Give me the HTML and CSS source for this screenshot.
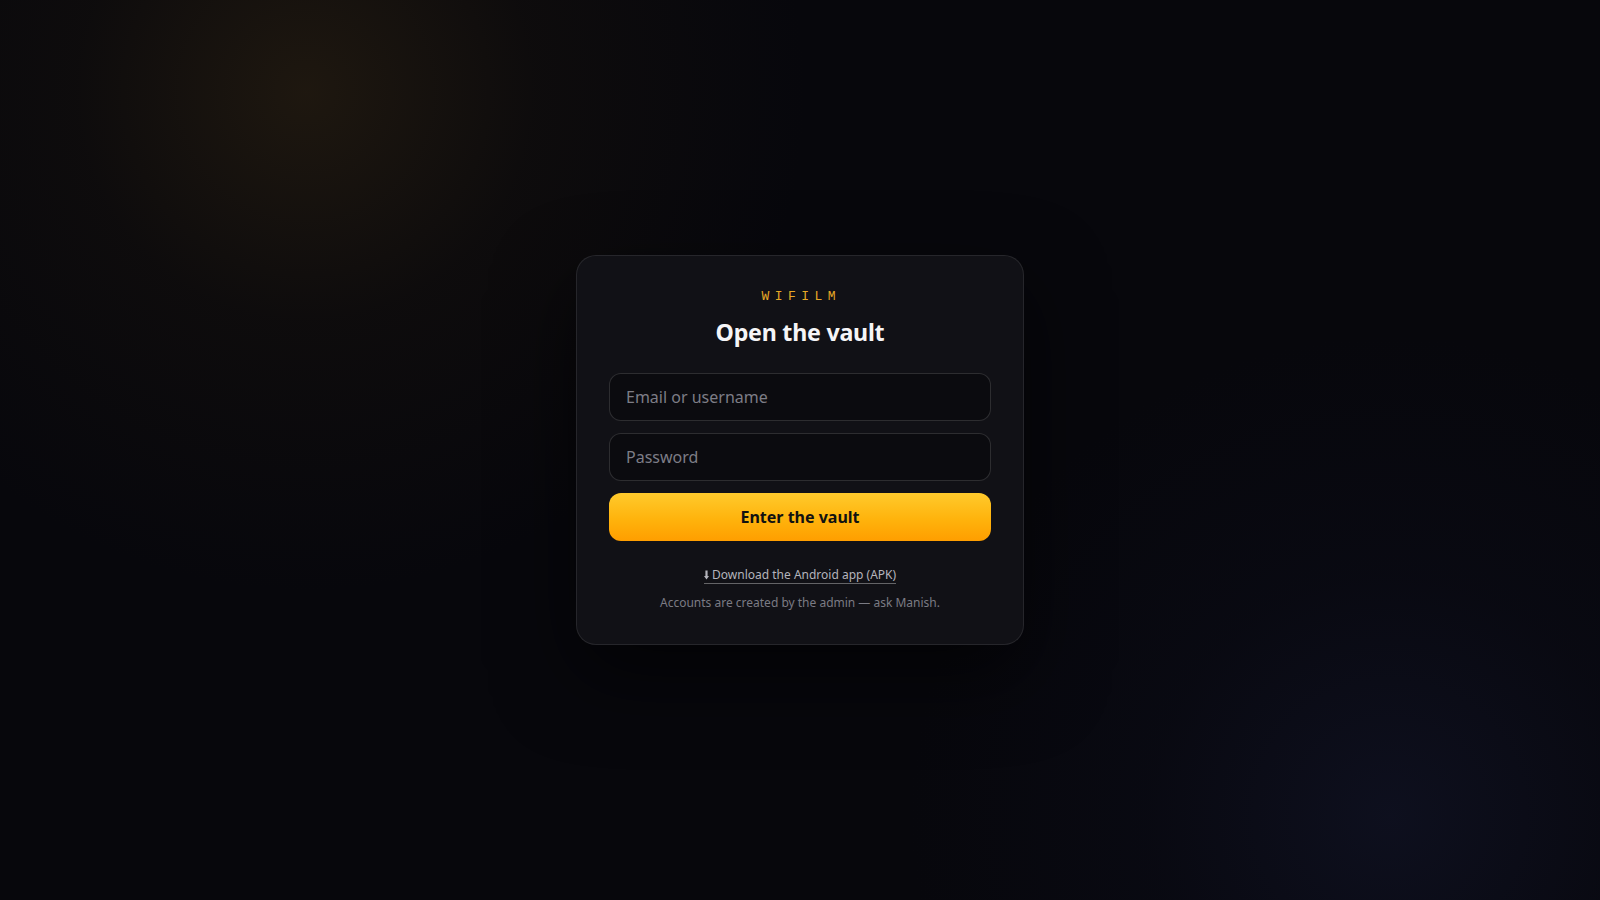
FILE: index.html
```html
<!DOCTYPE html>
<html lang="en">
<head>
<meta charset="utf-8">
<title>WIFILM — Open the vault</title>
<link rel="stylesheet" href="styles.css">
</head>
<body>
<main class="page">
  <form class="card" onsubmit="return false">
    <div class="brand">WIFILM</div>
    <h1 class="title">Open the vault</h1>
    <input class="field" type="text" placeholder="Email or username">
    <input class="field" type="password" placeholder="Password">
    <button class="submit" type="submit">Enter the vault</button>
    <a class="apk" href="#"><svg class="apk-icon" viewBox="0 0 6 11" width="5" height="10" aria-hidden="true"><path d="M1.7 0h2.6v6.6H6L3 11 0 6.6h1.7z" fill="currentColor"/></svg> Download the Android app (APK)</a>
    <p class="note">Accounts are created by the admin — ask Manish.</p>
  </form>
</main>
</body>
</html>
```

FILE: styles.css
```css
* { box-sizing: border-box; }
html, body { margin: 0; height: 100%; }
body {
  font-family: "Noto Sans", "Open Sans", sans-serif;
  color: #f2f2f5;
  background-color: #07070c;
  background-image:
    radial-gradient(circle at 306px 92px, rgba(62, 46, 20, 0.42) 0, rgba(40, 30, 14, 0.2) 230px, rgba(7, 7, 12, 0) 500px),
    radial-gradient(circle at 1390px 816px, rgba(22, 26, 52, 0.45) 0, rgba(14, 16, 34, 0.25) 240px, rgba(7, 7, 12, 0) 480px);
}
.page {
  min-height: 100vh;
  display: flex;
  align-items: center;
  justify-content: center;
}
.card {
  width: 448px;
  padding: 33px 32px 33px;
  border-radius: 20px;
  background: #111116;
  border: 1px solid rgba(255, 255, 255, 0.09);
  box-shadow: 0 30px 80px rgba(0, 0, 0, 0.6);
  display: flex;
  flex-direction: column;
  align-items: stretch;
  text-align: center;
}
.brand {
  font-family: "Liberation Mono", "DejaVu Sans Mono", monospace;
  font-size: 13px;
  line-height: 16px;
  letter-spacing: 0.42em;
  padding-left: 0.2em;
  color: #e6a826;
}
.title {
  margin: 10px 0 24px;
  font-size: 23.2px;
  line-height: 34px;
  font-weight: 700;
  color: #f5f5f7;
  letter-spacing: -0.01em;
}
.field {
  height: 48px;
  margin: 0 0 12px;
  padding: 0 16px;
  border-radius: 12px;
  border: 1px solid rgba(255, 255, 255, 0.14);
  background: #0b0b0f;
  color: #eee;
  font-family: inherit;
  font-size: 16px;
  outline: none;
}
.field::placeholder { color: #7d7d86; }
.submit {
  height: 48px;
  border: 0;
  border-radius: 12px;
  background: linear-gradient(180deg, #ffca2c 0%, #ffb30c 55%, #ff9e00 100%);
  color: #111;
  font-family: inherit;
  font-size: 16px;
  font-weight: 700;
  cursor: pointer;
}
.apk {
  align-self: center;
  margin-top: 25px;
  font-size: 12px;
  line-height: 17px;
  color: #b4b4bc;
  text-decoration: none;
  border-bottom: 1px solid rgba(255, 255, 255, 0.35);
}
.apk-icon { vertical-align: -1px; }
.note {
  margin: 10px 0 0;
  font-size: 12px;
  line-height: 17px;
  color: #7b7b84;
}
```
